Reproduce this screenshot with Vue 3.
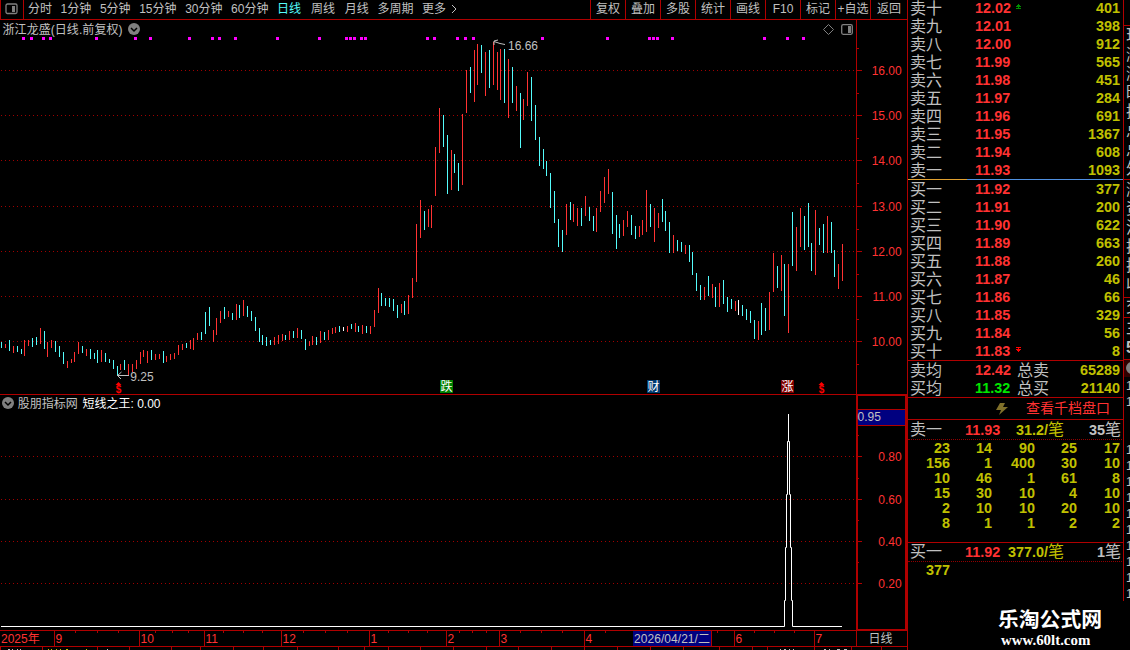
<template>
    <div class="terminal">
        <div class="main">
            <div class="toolbar">
                <div class="layout-btn">
                    <svg width="13" height="12" viewBox="0 0 13 12">
                        <rect x="1" y="1" width="11" height="9.5" rx="1.5" fill="none" stroke="#808080" stroke-width="1.3" />
                        <rect x="7" y="3" width="3" height="6" fill="#808080" />
                    </svg>
                </div>
                <div class="periods">
                    <span v-for="p in periods" :key="p.name" :class="['period', { active: p.active, wide: p.wide }]">{{ p.name }}</span>
                    <svg class="chevron" width="6" height="10" viewBox="0 0 6 10">
                        <path d="M1 1L5 5L1 9" fill="none" stroke="#c0c0c0" />
                    </svg>
                </div>
                <div class="actions">
                    <span v-for="a in actions" :key="a" class="action">{{ a }}</span>
                </div>
            </div>

            <svg class="chart" width="907" height="627" viewBox="0 20 907 627">
                <!-- grid -->
                <g class="grid">
                    <line v-for="y in gridLines" :key="y" x1="1" x2="855" :y1="y + 0.5" :y2="y + 0.5" />
                </g>
                <!-- price bars -->
                <g shape-rendering="crispEdges">
                    <rect v-for="b in bars" :key="b[0]" :x="b[0]" :y="b[1]" width="1" :height="b[2] - b[1]" :class="b[3]" />
                    <rect v-for="x in signals" :key="'s' + x" :x="x" y="37" width="3" height="3" class="signal" />
                </g>

                <!-- pane title -->
                <text x="2.5" y="33.5" class="txt" textLength="120">浙江龙盛(日线.前复权)</text>
                <circle cx="134" cy="29" r="6" fill="#808080" />
                <path d="M131 28L134 31L137 28" class="caret" />
                <path d="M828.5 24.5L833.5 29.5L828.5 34.5L823.5 29.5Z" class="diamond" />
                <rect x="841.7" y="24.7" width="10.6" height="9.6" rx="1.5" fill="none" stroke="#808080" stroke-width="1.3" />
                <rect x="848" y="26" width="3" height="7" fill="#808080" />

                <!-- high and low marks -->
                <path d="M505 44.5L500 43.5L494 41.5M498 40L494 41L494 45" class="arrow" />
                <text x="508" y="50" class="txt">16.66</text>
                <path d="M129 375.5H117.5M121.5 372L117.5 375.5L121 379" class="arrow" />
                <text x="130.3" y="381" class="txt">9.25</text>

                <!-- event badges -->
                <g v-for="e in dividends" :key="e" class="dividend">
                    <path :d="`M${e - 3} 385L${e} 382L${e + 3} 385Z`" />
                    <text :x="e" y="392.5" text-anchor="middle">$</text>
                </g>
                <g v-for="m in badges" :key="m.text">
                    <rect :x="m.x" y="380" width="13" height="13" :fill="m.fill" />
                    <text :x="m.x + 0.5" y="391" class="badge">{{ m.text }}</text>
                </g>

                <!-- indicator -->
                <circle cx="8" cy="403" r="6" fill="#808080" />
                <path d="M5 402L8 405L11 402" class="caret" />
                <text x="17.7" y="407.5" class="txt">股朋指标网</text>
                <text x="82.5" y="407.5" class="txt bright">短线之王: 0.00</text>
                <path :d="spike" class="spike" />

                <!-- frames -->
                <g class="frame" shape-rendering="crispEdges">
                    <rect x="0" y="394" width="907" height="1" />
                    <rect x="856" y="20" width="1" height="627" />
                    <rect x="0" y="630" width="907" height="1" />
                    <rect x="0" y="646" width="907" height="1" />
                    <rect x="856" y="394" width="51" height="2" />
                    <rect x="856" y="394" width="2" height="236" />
                    <rect x="905" y="394" width="2" height="236" />
                    <rect x="856" y="629" width="51" height="2" />
                    <rect v-for="t in priceTicks" :key="'p' + t.y" x="857" :y="t.y" :width="t.w" height="1" />
                    <rect v-for="x in minorTicks" :key="'m' + x" :x="x" y="631" width="1" height="2" />
                </g>

                <!-- scales -->
                <text v-for="l in scaleLabels" :key="l.text" x="901.7" :y="l.y + 4.5" text-anchor="end" class="scale">{{ l.text }}</text>
                <g shape-rendering="crispEdges">
                    <rect x="858" y="409" width="47" height="17" fill="#b00000" />
                    <rect x="858" y="410" width="47" height="15" fill="#000080" />
                </g>
                <text x="857.5" y="421" class="txt">0.95</text>

                <!-- dates -->
                <text x="1" y="643" class="scale">2025年</text>
                <g v-for="m in months" :key="'d' + m.x">
                    <rect :x="m.x" y="631" width="1" height="15" class="mark" />
                    <text :x="m.x + 1.5" y="643" class="scale">{{ m.text }}</text>
                </g>
                <rect x="633" y="631" width="79" height="15" fill="#000080" />
                <rect x="711" y="631" width="1" height="15" class="mark" />
                <text x="634" y="642.5" class="txt cursor-date" textLength="76">2026/04/21/二</text>
                <text x="868.5" y="642.5" class="txt">日线</text>
            </svg>

            <svg class="strip" width="907" height="3" shape-rendering="crispEdges">
                <rect v-for="x in stripTicks" :key="x" :x="x" y="0" width="1" height="3" class="mark" />
                <path d="M8 2.5h2M12 2.5h1M17 2.5h1M20 2.5h1M107 2.5h1" stroke="#c0c0c0" />
                <path d="M48 2.5h1M51 2.5h1M56 2.5h1M60 2.5h1M66 2.5h2M86 2.5h1" stroke="#c0c000" />
                <path d="M780 2.5h1M784 2.5h2M789 2.5h1M793 2.5h1M824 2.5h2M829 2.5h1M837 2.5h3M844 2.5h3" stroke="#c0c0c0" />
            </svg>
        </div>

        <div class="quotes">
            <div class="levels sells">
                <div v-for="(r, i) in sells" :key="r[0]" class="level">
                    <span class="name">卖{{ r[0] }}</span>
                    <span class="price">{{ r[1] }}</span>
                    <svg v-if="i === 0" class="limit" width="5" height="6" viewBox="0 0 5 6" shape-rendering="crispEdges">
                        <path d="M2 0h1v1h1v1h1v1h-5v-1h1v-1h1zM2 3h1v1h2v1h-5v-1h2z" fill="#009000" />
                    </svg>
                    <span class="qty">{{ r[2] }}</span>
                </div>
            </div>
            <div class="ratio"></div>
            <div class="levels buys">
                <div v-for="(r, i) in buys" :key="r[0]" class="level">
                    <span class="name">买{{ r[0] }}</span>
                    <span class="price">{{ r[1] }}</span>
                    <svg v-if="i === 9" class="limit" width="5" height="6" viewBox="0 0 5 6" shape-rendering="crispEdges">
                        <path d="M0 0h5v1h-2v1h2v1h-1v1h-1v1h-1v-1h-1v-1h-1v-1h2v-1h-2z" fill="#ff0000" />
                    </svg>
                    <span class="qty">{{ r[2] }}</span>
                </div>
            </div>
            <div class="levels averages">
                <div class="level">
                    <span class="name">卖均</span><span class="price">12.42</span>
                    <span class="total">总卖</span><span class="qty">65289</span>
                </div>
                <div class="level">
                    <span class="name">买均</span><span class="price down">11.32</span>
                    <span class="total">总买</span><span class="qty">21140</span>
                </div>
            </div>
            <div class="depth-link">
                <svg width="12" height="12" viewBox="0 0 12 12">
                    <path d="M4 0H9L7 4H12L3 12L5 7H0Z" fill="#80702a" />
                </svg>
                <span>查看千档盘口</span>
            </div>
            <div class="queue sell-queue">
                <div class="queue-head">
                    <span class="name">卖一</span><span class="price">11.93</span>
                    <span class="per"><b>31.2/</b>笔</span><span class="count"><b>35</b>笔</span>
                </div>
                <div class="orders">
                    <span v-for="(n, i) in sellOrders" :key="i">{{ n }}</span>
                </div>
            </div>
            <div class="queue buy-queue">
                <div class="queue-head">
                    <span class="name">买一</span><span class="price">11.92</span>
                    <span class="per"><b>377.0/</b>笔</span><span class="count"><b>1</b>笔</span>
                </div>
                <div class="orders">
                    <span>377</span>
                </div>
            </div>
            <div class="site">
                <div class="site-name">乐淘公式网</div>
                <div class="site-url">www.60lt.com</div>
            </div>
        </div>

        <div class="side">
            <div class="side-head"></div>
            <div class="side-group a"><span v-for="(t, i) in sideA" :key="i">{{ t }}</span></div>
            <div class="side-group b"><span v-for="(t, i) in sideB" :key="i">{{ t }}</span></div>
            <div class="side-group c"><span>交</span></div>
            <div class="side-group d"><span>主</span><b>5</b></div>
            <div class="side-dot"><i></i></div>
            <div class="side-group e"><span>1</span><span>1</span></div>
            <div class="side-group f"><span v-for="n in 10" :key="n">1</span></div>
        </div>
    </div>
</template>

<script setup>
const periods = [
    { name: '分时' }, { name: '1分钟' }, { name: '5分钟' }, { name: '15分钟' },
    { name: '30分钟' }, { name: '60分钟' }, { name: '日线', active: true, wide: true },
    { name: '周线', wide: true }, { name: '月线' }, { name: '多周期' }, { name: '更多' }
]
const actions = ['复权', '叠加', '多股', '统计', '画线', 'F10', '标记', '+自选', '返回']

// x, high, low; r = up, c = down, w = flat
const raw = `
1 342 348 c,5 344 348 r,9 340 351 c,13 346 353 r,17 346 352 c,21 349 354 c,24 340 356 r,28 340 346 r,
32 338 347 c,36 337 345 c,40 328 344 r,44 331 349 c,47 342 357 r,51 340 348 r,55 341 352 c,59 346 357 c,
63 352 364 c,67 361 368 r,71 359 363 r,74 352 362 r,78 342 354 r,82 346 353 c,86 349 356 r,90 349 359 c,
94 353 359 c,97 350 363 c,101 350 362 r,105 353 362 c,109 359 363 c,113 360 369 c,117 366 376 c,120 364 370 r,
124 360 370 c,128 364 376 r,132 364 372 r,136 360 369 r,140 352 364 r,143 350 357 r,147 351 363 r,151 350 360 c,
155 354 360 r,159 354 359 r,163 351 363 c,166 356 362 r,170 354 360 r,174 353 359 r,178 345 355 r,182 344 350 r,
186 343 348 c,190 340 349 r,193 338 350 r,197 333 340 r,201 332 340 c,205 312 334 c,209 307 326 c,213 330 342 r,
216 318 335 r,220 311 323 r,224 307 319 c,228 311 317 r,232 313 320 c,236 304 320 r,239 305 318 c,243 300 316 r,
247 306 317 c,251 311 321 c,255 317 331 c,259 328 342 c,262 335 345 c,266 337 346 c,270 340 345 c,274 337 345 r,
278 335 344 r,282 334 341 r,285 335 340 c,289 331 340 r,293 331 338 c,297 328 338 r,301 330 339 c,305 339 350 c,
309 341 346 r,312 336 345 r,316 337 345 c,320 331 343 r,324 332 340 c,328 330 340 r,332 328 334 r,335 327 333 r,
339 326 332 c,343 327 331 w,347 326 332 r,351 324 329 c,355 323 332 r,358 326 332 c,362 325 334 r,366 326 333 c,
370 326 334 r,374 310 327 r,378 288 313 r,381 293 306 c,385 298 306 c,389 298 307 c,393 299 311 c,397 305 318 c,
401 304 313 r,404 301 315 c,408 295 314 r,412 278 298 r,416 224 282 r,420 200 238 r,424 211 230 c,428 209 227 r,
431 205 228 r,435 147 196 r,439 108 153 r,443 115 147 c,447 135 194 c,451 150 190 r,454 154 173 c,458 163 191 c,
462 114 185 r,466 70 113 r,470 67 93 c,474 50 102 r,477 44 85 r,481 45 73 c,485 52 96 r,489 50 88 c,
493 42 85 r,497 52 90 r,500 49 100 r,504 49 103 c,508 59 118 r,512 67 103 c,516 86 111 r,520 93 148 c,
523 99 120 r,527 72 106 r,531 77 121 c,535 105 140 c,539 137 166 c,543 149 169 c,546 161 176 c,550 173 208 c,
554 191 223 c,558 219 247 c,562 230 252 c,566 204 235 r,570 202 220 c,573 204 222 r,577 208 226 r,581 208 226 c,
585 196 216 r,589 207 221 c,593 216 231 c,596 208 232 r,600 191 212 r,604 177 203 r,608 169 194 r,612 192 234 c,
616 215 249 c,619 224 238 c,623 220 236 r,627 211 227 r,631 215 235 c,635 226 239 c,639 226 237 r,642 220 235 r,
646 190 232 r,650 204 227 c,654 208 242 r,658 213 228 r,662 199 222 c,665 211 231 c,669 222 253 c,673 235 253 r,
677 240 251 c,681 242 252 c,685 245 254 r,689 245 262 c,692 252 275 c,696 273 291 c,700 285 300 c,704 287 300 r,
708 276 296 c,712 284 298 r,715 287 307 c,719 283 307 r,723 280 304 c,727 297 312 c,731 299 309 c,735 301 311 r,
738 300 315 w,742 305 316 c,746 309 320 c,750 311 323 c,754 320 339 c,758 321 340 r,761 303 335 c,765 308 331 c,
769 292 330 r,773 253 292 r,777 266 288 c,781 255 291 r,784 264 316 c,788 264 333 r,792 212 266 c,796 227 271 r,
800 208 247 r,804 216 250 c,808 203 247 c,811 243 271 c,815 210 275 r,819 228 245 c,823 224 253 c,827 216 253 r,
831 222 253 c,834 250 277 c,838 264 289 r,842 244 281 r`
const bars = raw.split(',').map(s => {
    const [x, high, low, kind] = s.trim().split(' ')
    return [+x, +high, +low, kind]
})

const signals = [22, 30, 42, 49, 95, 134, 149, 188, 211, 218, 234, 276, 318, 345, 349, 353, 360, 364,
    426, 433, 456, 464, 472, 541, 606, 648, 652, 656, 671, 763, 786, 802]

const scaleLabels = [
    { text: '16.00', y: 70 }, { text: '15.00', y: 115 }, { text: '14.00', y: 160 }, { text: '13.00', y: 206 },
    { text: '12.00', y: 251 }, { text: '11.00', y: 296 }, { text: '10.00', y: 341 },
    { text: '0.80', y: 456 }, { text: '0.60', y: 499 }, { text: '0.40', y: 541 }, { text: '0.20', y: 583 }
]
const gridLines = scaleLabels.map(l => l.y)
const priceTicks = [
    ...gridLines.map(y => ({ y, w: 5 })),
    ...[48, 93, 138, 183, 229, 274, 319, 364, 435, 478, 520, 562].map(y => ({ y, w: 2 }))
]

const dividends = [118.5, 821.5]
const badges = [
    { text: '跌', x: 440, fill: '#008000' },
    { text: '财', x: 647, fill: '#003a70' },
    { text: '涨', x: 781, fill: '#800000' }
]

const spike = 'M1 626.5H784.5V600.5H785.5V547.5H786.5V494.5H787.5V441.5H788.5V414V441.5H789.5V494.5H790.5V547.5H791.5V600.5H792.5V626.5H842'

const months = [
    { text: '9', x: 54 }, { text: '10', x: 139 }, { text: '11', x: 204 }, { text: '12', x: 281 },
    { text: '1', x: 369 }, { text: '2', x: 446 }, { text: '3', x: 499 }, { text: '4', x: 584 },
    { text: '6', x: 734 }, { text: '7', x: 814 }
]
const minorTicks = [75, 97, 118, 155, 172, 188, 223, 243, 262, 303, 325, 347, 388, 408, 427,
    459, 472, 486, 520, 541, 562, 605, 717, 754, 774, 794]
const stripTicks = [0, 42, 97, 129, 171, 200, 233, 263, 297, 338, 364, 388, 420, 453, 486, 518, 551, 584,
    617, 650, 683, 719, 752, 767, 814, 851, 881]

const sells = [
    ['十', '12.02', 401], ['九', '12.01', 398], ['八', '12.00', 912], ['七', '11.99', 565], ['六', '11.98', 451],
    ['五', '11.97', 284], ['四', '11.96', 691], ['三', '11.95', 1367], ['二', '11.94', 608], ['一', '11.93', 1093]
]
const buys = [
    ['一', '11.92', 377], ['二', '11.91', 200], ['三', '11.90', 622], ['四', '11.89', 663], ['五', '11.88', 260],
    ['六', '11.87', 46], ['七', '11.86', 66], ['八', '11.85', 329], ['九', '11.84', 56], ['十', '11.83', 8]
]
const sellOrders = [
    23, 14, 90, 25, 17,
    156, 1, 400, 30, 10,
    10, 46, 1, 61, 8,
    15, 30, 10, 4, 10,
    2, 10, 10, 20, 10,
    8, 1, 1, 2, 2
]

const sideA = ['现', '涨', '涨', '昨', '振', '总', '总', '外']
const sideB = ['涨', '资', '流', '换', '换', '收']
</script>

<style>
body {
    background: #000;
    overflow: hidden;
}
</style>

<style scoped>
.terminal {
    display: flex;
    width: 1130px;
    height: 650px;
    overflow: hidden;
    background: #000;
    color: #c0c0c0;
    font-family: "Liberation Sans", "Noto Sans CJK SC", sans-serif;
    font-size: 12px;
}

.main {
    width: 907px;
    display: flex;
    flex-direction: column;
    flex-shrink: 0;
}

.toolbar {
    display: flex;
    height: 19px;
    border-bottom: 1px solid #b00000;
    line-height: 19px;
    white-space: nowrap;
}

.layout-btn {
    box-sizing: border-box;
    width: 24px;
    padding: 3px 0 0 4px;
    border-left: 1px solid #b00000;
    border-right: 1px solid #b00000;
    line-height: 0;
}

.periods {
    display: flex;
    flex: 1;
    gap: 8.6px;
    padding-left: 4px;
}

.period.active {
    color: #54fcfc;
}

.period.wide {
    margin-right: 1.3px;
}

.chevron {
    margin: 4px 0 0 -4px;
}

.actions {
    display: flex;
}

.action {
    box-sizing: border-box;
    width: 35px;
    border-left: 1px solid #b00000;
    text-align: center;
}

.action:last-child {
    width: 37px;
}

.chart,
.strip {
    display: block;
    flex-shrink: 0;
}

.grid line {
    stroke: #a00000;
    stroke-dasharray: 1 3;
}

.r {
    fill: #ff3232;
}

.c {
    fill: #54fcfc;
}

.w {
    fill: #fff;
}

.signal {
    fill: #ff00ff;
}

.txt {
    fill: #c0c0c0;
    font-size: 12px;
}

.txt.bright {
    fill: #fff;
}

.scale {
    fill: #ff3232;
    font-size: 12px;
}

.caret {
    fill: none;
    stroke: #000;
    stroke-width: 1.5;
}

.diamond {
    fill: none;
    stroke: #808080;
}

.arrow {
    fill: none;
    stroke: #c0c0c0;
}

.dividend {
    fill: #ff0000;
    font-size: 10px;
    font-weight: bold;
}

.badge {
    fill: #fff;
    font-size: 12px;
}

.spike {
    fill: none;
    stroke: #fff;
}

.frame,
.mark {
    fill: #b00000;
}

.quotes {
    box-sizing: border-box;
    width: 217px;
    flex-shrink: 0;
    border-left: 1px solid #b00000;
    font-size: 16px;
}

.level,
.queue-head {
    display: flex;
    align-items: center;
    height: 18px;
    padding-right: 4px;
    line-height: 18px;
    white-space: nowrap;
}

.sells {
    height: 180px;
    margin-top: -1px;
}

.ratio {
    height: 1px;
    background: linear-gradient(to right, #e0a030 59px, #5090e0 59px);
}

.buys {
    height: 180px;
}

.averages {
    border-top: 1px solid #b00000;
    height: 36px;
}

.name {
    width: 65px;
    padding: 2px 0 0 2px;
}

.price {
    width: 36px;
    color: #ff3232;
    font-size: 14.4px;
    font-weight: bold;
}

.price.down {
    color: #00e600;
}

.limit {
    margin: 0 0 2px 5px;
}

.qty {
    margin-left: auto;
    color: #c0c000;
    font-size: 14.4px;
    font-weight: bold;
}

.total {
    margin-left: 6px;
    padding-top: 2px;
}

.depth-link {
    display: flex;
    align-items: center;
    height: 21px;
    border-top: 1px solid #b00000;
    padding-left: 88px;
    color: #ff3232;
    font-size: 14px;
    line-height: 18px;
    white-space: nowrap;
}

.depth-link svg {
    margin-right: 18px;
}

.depth-link span {
    margin-top: -2px;
}

.queue {
    border-top: 1px solid #b00000;
}

.sell-queue {
    height: 122px;
}

.queue-head {
    height: 19px;
    margin: 0 2px 0 0;
    padding-right: 1px;
    border-bottom: 1px dotted #900000;
}

.buy-queue .queue-head {
    height: 18px;
}

.queue-head .name {
    width: 55px;
    padding-top: 0;
}

.queue-head b {
    font-size: 14.4px;
}

.per {
    width: 63px;
    text-align: right;
    color: #c0c000;
}

.count {
    margin-left: auto;
}

.orders {
    display: grid;
    grid-template-columns: 42px 42px 43px 42px 43px;
    color: #c0c000;
    font-size: 14.4px;
    font-weight: bold;
    line-height: 15px;
    text-align: right;
    padding-top: 1px;
}

.site {
    margin-top: 30px;
    padding-left: 90px;
    color: #fff;
    font-weight: bold;
    white-space: nowrap;
}

.site-name {
    font-size: 20.8px;
    line-height: 24px;
}

.site-url {
    padding-left: 3px;
    font-family: "Liberation Serif", serif;
    font-size: 14.9px;
    line-height: 16px;
}

.side {
    box-sizing: border-box;
    width: 7px;
    height: 601px;
    margin-left: -1px;
    border-left: 1px solid #b00000;
    overflow: hidden;
    font-size: 16px;
    line-height: 18px;
}

.side-head {
    height: 25px;
    border-bottom: 1px solid #b00000;
}

.side-group {
    box-sizing: border-box;
    display: flex;
    flex-direction: column;
    padding-left: 2px;
    border-bottom: 1px solid #b00000;
}

.side-group.a {
    height: 154px;
    line-height: 19px;
}

.side-group.b {
    height: 118px;
    line-height: 19px;
}

.side-group.c {
    height: 20px;
}

.side-group.d {
    height: 42px;
    line-height: 20px;
}

.side-dot {
    height: 17px;
    background: #300000;
    overflow: hidden;
}

.side-dot i {
    display: block;
    width: 12px;
    height: 12px;
    margin: 2px;
    border-radius: 6px;
    background: #808080;
}

.side-group.e {
    height: 65px;
    padding-top: 1px;
    border-bottom: none;
    font-size: 12px;
    line-height: 16px;
}

.side-group.f {
    border-bottom: none;
    line-height: 16px;
    font-size: 12px;
}
</style>
